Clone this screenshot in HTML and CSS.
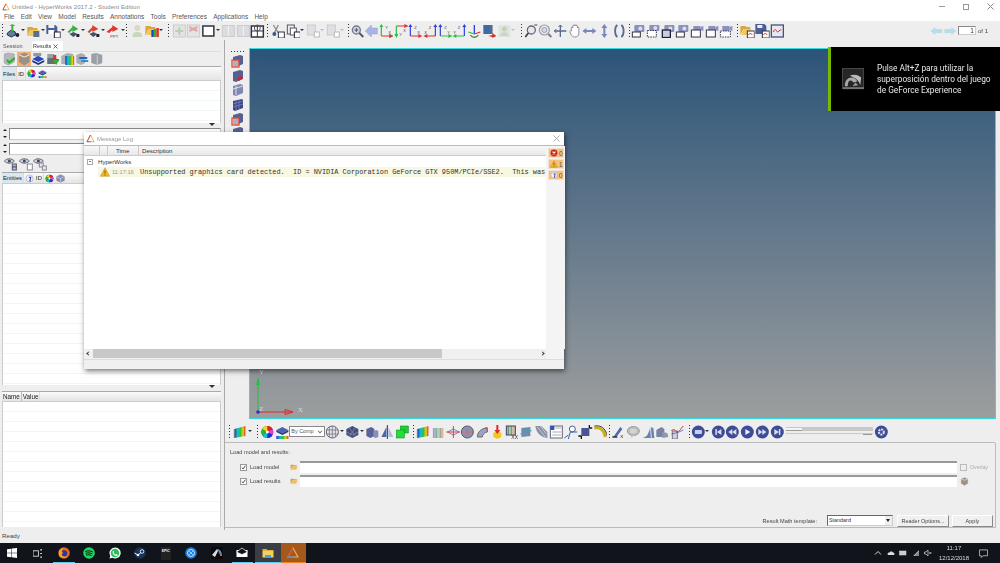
FILE: index.html
```html
<!DOCTYPE html>
<html lang="en">
<head>
<meta charset="utf-8">
<title>HyperWorks</title>
<link rel="stylesheet" href="styles.css">
</head>
<body>
<svg class="defs" aria-hidden="true">
  <defs>
    <linearGradient id="bar" x1="0" x2="1" y1="0" y2="0"><stop offset="0" stop-color="#2030d0"/><stop offset=".3" stop-color="#18c0d0"/><stop offset=".55" stop-color="#30c030"/><stop offset=".8" stop-color="#e8d020"/><stop offset="1" stop-color="#e02020"/></linearGradient>
    <linearGradient id="barf" x1="0" x2="1" y1="0" y2="0"><stop offset="0" stop-color="#a0a8e0"/><stop offset=".5" stop-color="#a8dca8"/><stop offset="1" stop-color="#e8a8a0"/></linearGradient>
    <symbol id="model" viewBox="0 0 14 14"><path d="M1 9l4-3 4 2v3l-4 2-4-2z" fill="#5a7fa0" stroke="#334"/><path d="M5 7V2H3l3-2 3 2H7v5z" fill="#3cb43c"/><circle cx="11" cy="11" r="2" fill="#223"/></symbol>
    <symbol id="folder" viewBox="0 0 14 14"><path d="M1 3h5l1 1h4v2H4L1 12z" fill="#d8a840"/><path d="M4 6h9l-2 6H1z" fill="#f0c860"/><rect x="7" y="7" width="6" height="6" fill="#5a6f90"/></symbol>
    <symbol id="save" viewBox="0 0 14 14"><path d="M0 1h9l2 2v7H0z" fill="#4a5f98"/><rect x="2" y="1" width="6" height="3" fill="#eef"/><rect x="2" y="6" width="6" height="4" fill="#fff"/><rect x="8" y="8" width="6" height="6" fill="#fff" stroke="#223"/></symbol>
    <symbol id="garrow" viewBox="0 0 14 14"><path d="M1 8l5-5V1l6 4-6 3V6l-3 3z" fill="#3cb43c"/><path d="M3 10l4-2 4 2-4 3z" fill="#456"/><rect x="10" y="10" width="3" height="3" fill="#223"/></symbol>
    <symbol id="rarrow" viewBox="0 0 14 14"><path d="M1 8l5-5V1l6 4-6 3V6l-3 3z" fill="#d84030"/><path d="M3 10l4-2 4 2-4 3z" fill="#456"/><rect x="10" y="10" width="3" height="3" fill="#223"/></symbol>
    <symbol id="ppt" viewBox="0 0 14 14"><path d="M0 8l6-5V1l6 4-6 3V6L3 9z" fill="#e03828"/><text x="4" y="13.5" font-size="4" font-family="Liberation Sans" fill="#444">PPT</text></symbol>
    <symbol id="person" viewBox="0 0 14 14"><circle cx="7" cy="4" r="3" fill="#d8d8c8"/><path d="M2 13c0-4 2-5 5-5s5 1 5 5z" fill="#c8d8c0"/></symbol>
    <symbol id="fcolor" viewBox="0 0 14 14"><path d="M0 2h5l1 1h4v2H3L0 12z" fill="#d8a840"/><path d="M3 5h8l-1 6H1z" fill="#f0c860"/><rect x="6" y="6" width="2.500" height="7" fill="#2040d0"/><rect x="8.500" y="5" width="2.500" height="8" fill="#30b030"/><rect x="11" y="4" width="2.500" height="9" fill="#e03020"/></symbol>
    <symbol id="fplus" viewBox="0 0 14 14"><rect x="1" y="1" width="12" height="12" fill="#e4e4e4" stroke="#ccc"/><path d="M7 3v8M3 7h8" stroke="#b8d0b8" stroke-width="2"/></symbol>
    <symbol id="fred" viewBox="0 0 14 14"><rect x="1" y="1" width="12" height="12" fill="#e4e4e4" stroke="#ccc"/><path d="M3 3l8 4M11 3L3 7" stroke="#e0a8a8" stroke-width="2"/></symbol>
    <symbol id="box" viewBox="0 0 14 14"><rect x="1.500" y="2" width="11" height="10" fill="#fff" stroke="#334" stroke-width="1.500"/></symbol>
    <symbol id="fbox" viewBox="0 0 14 14"><rect x="1" y="1.500" width="12" height="11" fill="#dcdce0" stroke="#ccc"/><path d="M7 2v10" stroke="#f4f4f4"/></symbol>
    <symbol id="calc" viewBox="0 0 14 14"><rect x="1" y="2" width="12" height="11" fill="#fff" stroke="#334" stroke-width="1.500"/><path d="M1 7h12M7 2v11" stroke="#334"/><circle cx="7" cy="4" r="3" fill="none" stroke="#556"/></symbol>
    <symbol id="scis" viewBox="0 0 14 14"><path d="M2 1l5 8M7 1L3 9" stroke="#889" stroke-width="1.300"/><circle cx="3" cy="10" r="2" fill="#458"/><rect x="7" y="8" width="6" height="6" fill="#fff" stroke="#334"/></symbol>
    <symbol id="copy" viewBox="0 0 14 14"><rect x="1" y="1" width="7" height="9" fill="#eee" stroke="#556"/><rect x="4" y="4" width="6" height="7" fill="#fff" stroke="#556"/><rect x="8" y="8" width="6" height="6" fill="#fff" stroke="#223"/></symbol>
    <symbol id="fcopy" viewBox="0 0 14 14"><rect x="1" y="1" width="8" height="10" fill="#dfe0e6" stroke="#ccc"/><rect x="8" y="8" width="5" height="5" fill="#fff" stroke="#bbb"/></symbol>
    <symbol id="zoom" viewBox="0 0 14 14"><circle cx="6" cy="6" r="4" fill="#c8d8e8" stroke="#778" stroke-width="1.300"/><path d="M9 9l4 4" stroke="#556" stroke-width="2"/><path d="M4 6h4M6 4v4" stroke="#556"/></symbol>
    <symbol id="larrow" viewBox="0 0 14 14"><path d="M1 7l6-6v3h6v6H7v3z" fill="#aab4e4" stroke="#8f9ad0" stroke-width=".5"/></symbol>
    <symbol id="ax1" viewBox="0 0 14 14"><path d="M2 2v10" stroke="#2cc040" stroke-width="1.200"/><path d="M0 3l2-3 2 3zM10 10l4 2-4 2z" fill="#2cc040"/><path d="M2 12h9" stroke="#e03030" stroke-width="1.200"/><path d="M10 10l4 2-4 2z" fill="#e03030"/><text x="6" y="5" font-size="4" font-family="Liberation Sans" fill="#444">Y</text><text x="9" y="9.500" font-size="4" font-family="Liberation Sans" fill="#444">X</text></symbol>
    <symbol id="ax2" viewBox="0 0 14 14"><path d="M2 2h9" stroke="#e03030" stroke-width="1.200"/><path d="M10 0l4 2-4 2z" fill="#e03030"/><path d="M2 2v9" stroke="#2cc040" stroke-width="1.200"/><path d="M0 10l2 4 2-4z" fill="#2cc040"/><text x="5" y="12" font-size="4" font-family="Liberation Sans" fill="#444">Y</text><text x="9" y="8" font-size="4" font-family="Liberation Sans" fill="#444">X</text></symbol>
    <symbol id="ax3" viewBox="0 0 14 14"><path d="M2 2v10" stroke="#3040e0" stroke-width="1.200"/><path d="M0 3l2-3 2 3z" fill="#3040e0"/><path d="M2 12h9" stroke="#e03030" stroke-width="1.200"/><path d="M10 10l4 2-4 2z" fill="#e03030"/><text x="6" y="5" font-size="4" font-family="Liberation Sans" fill="#444">Z</text><text x="9" y="9.500" font-size="4" font-family="Liberation Sans" fill="#444">X</text></symbol>
    <symbol id="ax4" viewBox="0 0 14 14"><path d="M12 2v10" stroke="#3040e0" stroke-width="1.200"/><path d="M10 3l2-3 2 3z" fill="#3040e0"/><path d="M3 12h9" stroke="#e03030" stroke-width="1.200"/><path d="M4 10l-4 2 4 2z" fill="#e03030"/><text x="5.500" y="5" font-size="4" font-family="Liberation Sans" fill="#444">Z</text><text x="1" y="9.500" font-size="4" font-family="Liberation Sans" fill="#444">X</text></symbol>
    <symbol id="ax5" viewBox="0 0 14 14"><path d="M2 2v10" stroke="#3040e0" stroke-width="1.200"/><path d="M0 3l2-3 2 3z" fill="#3040e0"/><path d="M2 12h9" stroke="#2cc040" stroke-width="1.200"/><path d="M10 10l4 2-4 2z" fill="#2cc040"/><text x="6" y="5" font-size="4" font-family="Liberation Sans" fill="#444">Z</text><text x="9" y="9.500" font-size="4" font-family="Liberation Sans" fill="#444">Y</text></symbol>
    <symbol id="ax6" viewBox="0 0 14 14"><path d="M12 2v10" stroke="#3040e0" stroke-width="1.200"/><path d="M10 3l2-3 2 3z" fill="#3040e0"/><path d="M3 12h9" stroke="#2cc040" stroke-width="1.200"/><path d="M4 10l-4 2 4 2z" fill="#2cc040"/><text x="5.500" y="5" font-size="4" font-family="Liberation Sans" fill="#444">Z</text><text x="1" y="9.500" font-size="4" font-family="Liberation Sans" fill="#444">Y</text></symbol>
    <symbol id="ax7" viewBox="0 0 14 14"><path d="M7 1v9" stroke="#3040e0" stroke-width="1.300"/><path d="M7 10l6-2" stroke="#e03030" stroke-width="1.300"/><path d="M7 10L1 8" stroke="#2cc040" stroke-width="1.300"/><path d="M3 11c2 3 6 3 8 0" fill="none" stroke="#3a8a40" stroke-width="1.300"/></symbol>
    <symbol id="view" viewBox="0 0 14 14"><rect x="1" y="1" width="9" height="9" fill="#3a6aa8"/><path d="M7 1h3v9H7z" fill="#5a6a80"/><path d="M6 12l4-1V9l4 3-4 2v-1z" fill="#e02828"/></symbol>
    <symbol id="fperson" viewBox="0 0 14 14"><rect x="1" y="1" width="12" height="12" fill="#dfe4e0"/><circle cx="7" cy="5" r="2.500" fill="#c8d0b8"/><path d="M3 12c0-3 2-4 4-4s4 1 4 4z" fill="#c8d8c8"/></symbol>
    <symbol id="zin" viewBox="0 0 14 14"><circle cx="7" cy="6" r="4" fill="#e4e8ee" stroke="#667" stroke-width="1.300"/><path d="M4 9l-3 4" stroke="#445" stroke-width="1.800"/><path d="M10 1h3" stroke="#445"/></symbol>
    <symbol id="zfit" viewBox="0 0 14 14"><circle cx="6" cy="6" r="5" fill="none" stroke="#99a" stroke-width="1.200"/><circle cx="6" cy="6" r="2.500" fill="#d8dce8" stroke="#99a"/><path d="M10 10l3 3" stroke="#778" stroke-width="1.800"/></symbol>
    <symbol id="cross" viewBox="0 0 14 14"><path d="M7 1v12M1 7h12" stroke="#5a6a8a" stroke-width="1.300"/><path d="M7 1L5 3M7 1l2 2M1 7l2-2M1 7l2 2" stroke="#5a6a8a"/></symbol>
    <symbol id="hand" viewBox="0 0 14 14"><path d="M3 7V4c0-1 1.500-1 1.500 0V2c0-1 1.500-1 1.500 0v-.5c0-1 1.500-1 1.500 0V2c0-1 1.500-1 1.500 0v2c0-1 1.500-1 1.500 0v5c0 3-2 4-4 4s-3-1-4-3L1.500 8c-.5-1 1-1.500 1.500-1z" fill="#fff" stroke="#778" stroke-width=".8"/></symbol>
    <symbol id="hmove" viewBox="0 0 14 14"><path d="M0 7l4-3v2h6V4l4 3-4 3V8H4v2z" fill="#7a86c0"/></symbol>
    <symbol id="vmove" viewBox="0 0 14 14"><path d="M7 0l3 4H8v6h2l-3 4-3-4h2V4H4z" fill="#7a86c0"/></symbol>
    <symbol id="rot" viewBox="0 0 14 14"><path d="M5 1C2 3 2 11 5 13M9 1c3 2 3 10 0 12" fill="none" stroke="#5a6a9a" stroke-width="1.800"/></symbol>
    <symbol id="cam1" viewBox="0 0 14 14"><rect x="3" y="1" width="10" height="7" rx="1" fill="#8a90c0"/><circle cx="9" cy="4.500" r="2" fill="#dde"/><rect x="1" y="8" width="8" height="5" fill="#fff" stroke="#334"/></symbol>
    <symbol id="cam2" viewBox="0 0 14 14"><rect x="3" y="1" width="10" height="6" rx="1" fill="#8a90c0"/><circle cx="9" cy="4" r="2" fill="#dde"/><rect x="1" y="6.500" width="9" height="6.500" fill="#fff" stroke="#334" stroke-dasharray="1.500 1"/></symbol>
    <symbol id="cam3" viewBox="0 0 14 14"><rect x="3" y="1" width="10" height="7" rx="1" fill="#8a90c0"/><circle cx="9" cy="4.500" r="2" fill="#dde"/><rect x="1" y="6" width="8" height="7.500" fill="#c8cce8" stroke="#223" stroke-width="1.300"/></symbol>
    <symbol id="cam4" viewBox="0 0 14 14"><path d="M3 2h7v5H3z" fill="#8a90c0"/><path d="M10 3l3-1v5l-3-1z" fill="#8a90c0"/><rect x="1" y="6" width="9" height="7" fill="#fff" stroke="#334"/></symbol>
    <symbol id="cam5" viewBox="0 0 14 14"><path d="M3 2h7v5H3z" fill="#8a90c0"/><path d="M10 3l3-1v5l-3-1z" fill="#8a90c0"/><rect x="1" y="7" width="10" height="6" fill="#fff" stroke="#334" stroke-dasharray="1.500 1"/></symbol>
    <symbol id="fgraph" viewBox="0 0 14 14"><path d="M0 2h5l1 1h4v2H3L0 11z" fill="#d8a840"/><path d="M3 5h8l-2 6H1z" fill="#f0c860"/><rect x="7" y="7" width="7" height="7" fill="#fff" stroke="#334"/><path d="M8 11l2-2 2 2" stroke="#e03030" fill="none"/></symbol>
    <symbol id="sgraph" viewBox="0 0 14 14"><path d="M0 0h9l2 2v8H0z" fill="#4a5f98"/><rect x="2" y="1" width="5" height="3" fill="#eef"/><rect x="7" y="7" width="7" height="7" fill="#fff" stroke="#334"/><path d="M8 11l2-2 2 2" stroke="#e03030" fill="none"/></symbol>
    <symbol id="graph" viewBox="0 0 14 14"><rect x="1" y="1" width="12" height="12" fill="#e8e8f4" stroke="#4a5078" stroke-width="1.300"/><path d="M3 8c2-5 3-1 4 0s2-3 4-2" stroke="#e03030" fill="none"/></symbol>
    <symbol id="navl" viewBox="0 0 14 14"><path d="M1 7l5-4v2h7v4H6v2z" fill="#b8dcec"/></symbol>
    <symbol id="navr" viewBox="0 0 14 14"><path d="M13 7L8 3v2H1v4h7v2z" fill="#b8dcec"/></symbol>
    <symbol id="rcheck" viewBox="0 0 14 14"><path d="M2 2l4-1 6 1v8l-6 3-4-2z" fill="#b4b8bc" stroke="#889" stroke-width=".5"/><path d="M4 9l3 3 6-5-1-2-5 4-2-2z" fill="#30b030"/></symbol>
    <symbol id="rmod" viewBox="0 0 14 14"><path d="M2 3l5-2 5 2v7l-5 3-5-3z" fill="#a09080" stroke="#889" stroke-width=".5"/><path d="M2 3l5 2 5-2" fill="none" stroke="#eee"/></symbol>
    <symbol id="rblue" viewBox="0 0 14 14"><path d="M2 1h8v3L6 5 2 4z" fill="#9098a0"/><path d="M1 7l6-3 6 3-6 3z" fill="#2848c0"/><path d="M1 8l6 3 6-3v2l-6 3-6-3z" fill="#283880"/></symbol>
    <symbol id="rdown" viewBox="0 0 14 14"><path d="M1 2h7v4H1z" fill="#9aa0aa"/><rect x="1" y="6" width="9" height="6" fill="#60707a"/><path d="M7 3h3v4h3l-4 5-4-5h2z" fill="#e03028"/><path d="M6 8h7l-3 5z" fill="#30b030"/></symbol>
    <symbol id="rcolor" viewBox="0 0 14 14"><path d="M1 4l6-3 6 1v10H1z" fill="#a8aeb4"/><rect x="5" y="4" width="9" height="9" fill="url(#bar)"/></symbol>
    <symbol id="rflow" viewBox="0 0 14 14"><path d="M1 3l5-2 4 2v8l-4 2-5-2z" fill="#a8aeb4"/><rect x="4" y="5" width="8" height="2" fill="#3060c0"/><rect x="6" y="8" width="7" height="2" fill="#3090d0"/></symbol>
    <symbol id="rgrey" viewBox="0 0 14 14"><path d="M2 2l5-1 6 2v8l-5 2-6-2z" fill="#9aa0a6"/><path d="M8 3v10" stroke="#d0d0d0"/></symbol>
    <symbol id="wheel" viewBox="0 0 14 14"><circle cx="7" cy="7" r="6" fill="#222"/><path d="M7 7V1a6 6 0 0 1 5.200 3z" fill="#e82020"/><path d="M7 7l5.200-3a6 6 0 0 1 0 6z" fill="#e040d0"/><path d="M7 7l5.200 3A6 6 0 0 1 7 13z" fill="#2030d8"/><path d="M7 7v6a6 6 0 0 1-5.200-3z" fill="#18c0e0"/><path d="M7 7L1.800 10a6 6 0 0 1 0-6z" fill="#20c020"/><path d="M7 7L1.800 4A6 6 0 0 1 7 1z" fill="#f0d820"/><circle cx="7" cy="7" r="1.500" fill="#fff"/></symbol>
    <symbol id="stack" viewBox="0 0 14 14"><path d="M1 5l6-3 6 3-6 3z" fill="#5060b0"/><path d="M1 5v2l6 3 6-3V5L7 8z" fill="#303c80"/><rect x="1" y="11" width="12" height="3" fill="url(#bar)"/></symbol>
    <symbol id="cubeg" viewBox="0 0 14 14"><path d="M7 1l6 3v6l-6 3-6-3V4z" fill="#8890b8" stroke="#5a6088" stroke-width=".5"/><path d="M1 4l6 3 6-3M7 7v6" fill="none" stroke="#eef" stroke-width=".8"/></symbol>
    <symbol id="eye1" viewBox="0 0 14 14"><path d="M0 4c3-3 7-3 10 0-3 3-7 3-10 0z" fill="#cdd3dc" stroke="#667"/><circle cx="5" cy="4" r="1.500" fill="#445"/><rect x="8" y="7" width="4" height="3" fill="#a8c0e0" stroke="#556"/><rect x="8" y="10" width="4" height="3" fill="#a8c0e0" stroke="#556"/></symbol>
    <symbol id="eye2" viewBox="0 0 14 14"><path d="M0 4c3-3 7-3 10 0-3 3-7 3-10 0z" fill="#cdd3dc" stroke="#667"/><circle cx="5" cy="4" r="1.500" fill="#445"/><rect x="8" y="7" width="5" height="6" fill="#fff" stroke="#889"/></symbol>
    <symbol id="eye3" viewBox="0 0 14 14"><path d="M0 4c3-3 7-3 10 0-3 3-7 3-10 0z" fill="#cdd3dc" stroke="#667"/><circle cx="5" cy="4" r="1.500" fill="#445"/><rect x="6" y="6" width="4" height="4" fill="#e8e8e8" stroke="#889"/><rect x="9" y="9" width="4" height="4" fill="#e8e8e8" stroke="#889"/></symbol>
    <symbol id="info" viewBox="0 0 14 14"><circle cx="7" cy="7" r="5.500" fill="#eef0fa" stroke="#aab"/><path d="M6 5h3L7.500 11H9" stroke="#2a40b0" stroke-width="1.600" fill="none"/></symbol>
    <symbol id="s1" viewBox="0 0 14 14"><path d="M2 3l7-2 3 1v8l-7 3-3-1z" fill="#586090"/><rect x="1" y="6" width="7" height="7" fill="#fff" fill-opacity=".5" stroke="#e04830" stroke-width="1.300"/></symbol>
    <symbol id="s2" viewBox="0 0 14 14"><path d="M2 3l7-2 3 1v8l-7 3-3-1z" fill="#586090"/><path d="M6 10l4-3 2 2-4 3z" fill="#e02020"/></symbol>
    <symbol id="s3" viewBox="0 0 14 14"><path d="M2 3l7-2 3 1v8l-7 3-3-1z" fill="#8088b0"/><path d="M2 6l10-3M5 3v9" stroke="#dde"/></symbol>
    <symbol id="s4" viewBox="0 0 14 14"><path d="M2 3l9-2 1 1v8l-8 3-2-1z" fill="#3c4888"/><path d="M2 6l10-3M2 9l10-3M5 3v9M8 2v9" stroke="#8890c8" stroke-width=".6"/></symbol>
    <symbol id="wire" viewBox="0 0 14 14"><circle cx="7" cy="7" r="6" fill="#e4e8ea" stroke="#667"/><path d="M1 5h12M1 9h12M4 2v10M7 1v12M10 2v10" stroke="#667" stroke-width=".7"/></symbol>
    <symbol id="dwire" viewBox="0 0 14 14"><path d="M7 1l6 3v6l-6 3-6-3V4z" fill="#445080"/><path d="M1 7l6 3 6-3M4 3l6 8M10 3l-6 8" stroke="#aab" stroke-width=".5" fill="none"/></symbol>
    <symbol id="cubes" viewBox="0 0 14 14"><path d="M1 4l5-2 3 2v7l-4 2-4-2z" fill="#5a6498"/><path d="M8 6l3-1 2 1v6l-3 1-2-1z" fill="#8890b8"/></symbol>
    <symbol id="mirror" viewBox="0 0 14 14"><path d="M7 0v14" stroke="#334"/><path d="M6 2v10H1z" fill="#5064b0"/><path d="M8 2v10h5z" fill="#b0bce0"/></symbol>
    <symbol id="gcube" viewBox="0 0 14 14"><rect x="5" y="1" width="8" height="7" fill="#18d030" stroke="#0a8020" stroke-width=".5"/><rect x="1" y="5" width="8" height="8" fill="#20e038" stroke="#0a8020" stroke-width=".5"/></symbol>
    <symbol id="cbar" viewBox="0 0 14 14"><path d="M1 4l11-3v10L1 13z" fill="url(#bar)"/><path d="M1 4v9" stroke="#778"/></symbol>
    <symbol id="cbarf" viewBox="0 0 14 14"><path d="M2 3h10v10H2z" fill="url(#barf)"/><path d="M2 3v10M5 3v10M9 3v10" stroke="#778" stroke-width=".5"/></symbol>
    <symbol id="sym" viewBox="0 0 14 14"><path d="M1 7l6-3 6 3-6 3z" fill="none" stroke="#8088b0"/><path d="M7 1v12" stroke="#e04040"/><path d="M0 7h14" stroke="#e04040"/></symbol>
    <symbol id="sph" viewBox="0 0 14 14"><circle cx="7" cy="7" r="6" fill="#8a96b8" stroke="#556"/><path d="M1 7h12M7 1v12M3 3l8 8M11 3l-8 8" stroke="#e06060" stroke-width=".6"/></symbol>
    <symbol id="tube" viewBox="0 0 14 14"><path d="M2 12c0-5 4-9 10-9v4c-3 0-5 3-5 5z" fill="#9aa4c0" stroke="#667"/><circle cx="11" cy="3" r="1" fill="#e04040"/></symbol>
    <symbol id="yarrow" viewBox="0 0 14 14"><path d="M3 8l4-2 4 2v4l-4 2-4-2z" fill="#f0c820"/><path d="M6 0h2v5h2L7 9 4 5h2z" fill="#e02828"/></symbol>
    <symbol id="cbarx" viewBox="0 0 14 14"><rect x="1" y="1" width="9" height="9" fill="url(#barf)" stroke="#445"/><path d="M3 1v9M6 1v9" stroke="#445" stroke-width=".5"/><text x="6" y="14" font-size="5" font-family="Liberation Sans" fill="#333">XX</text></symbol>
    <symbol id="flow" viewBox="0 0 14 14"><path d="M2 3l9-1v9l-9 1z" fill="#7a84a8"/><path d="M4 6h8l-2-2M1 9h8l-2 2" stroke="#2ab0d0" fill="none"/></symbol>
    <symbol id="dish" viewBox="0 0 14 14"><path d="M1 1c1 7 5 11 12 12V7L7 1z" fill="#8a92a8"/><path d="M3 2l8 10M6 1l6 8" stroke="#dde" stroke-width=".7"/></symbol>
    <symbol id="panel" viewBox="0 0 14 14"><rect x="1" y="1" width="12" height="12" fill="#fff" stroke="#667"/><rect x="1" y="1" width="4" height="4" fill="#3050c0"/><path d="M6 3h6M3 7h9M3 10h9" stroke="#aab"/></symbol>
    <symbol id="pax" viewBox="0 0 14 14"><circle cx="9" cy="4" r="3" fill="#fff" stroke="#4060a0"/><path d="M7 7l-2 7M7 7h7M5 10L1 13" stroke="#4060a0"/></symbol>
    <symbol id="node" viewBox="0 0 14 14"><rect x="3" y="3" width="8" height="8" fill="#4a5490"/><path d="M0 11h3M3 11v3M11 3h3M11 0v3" stroke="#112" stroke-width="1.300"/></symbol>
    <symbol id="bend" viewBox="0 0 14 14"><path d="M1 3c6-1 10 2 11 9" fill="none" stroke="#c8b020" stroke-width="3"/><path d="M1 1c7-1 11 2 13 10" fill="none" stroke="#222" stroke-width=".8"/></symbol>
    <symbol id="tool1" viewBox="0 0 14 14"><path d="M2 12L9 2l2 2-6 8z" fill="#4a6ab0"/><path d="M1 12h5" stroke="#334" stroke-width="1.300"/><text x="9" y="13" font-size="6" font-family="Liberation Sans" fill="#333">x</text></symbol>
    <symbol id="bubble" viewBox="0 0 14 14"><ellipse cx="7" cy="6" rx="6" ry="4.500" fill="#bcc0bc" stroke="#999"/><path d="M5 10v3l3-3z" fill="#bcc0bc"/><path d="M4 5h6M4 7h6" stroke="#fff" stroke-width=".7"/></symbol>
    <symbol id="ramp" viewBox="0 0 14 14"><path d="M1 13c5-1 6-4 8-11l3 1 1 10z" fill="#6a80b0"/><path d="M9 2l1 11" stroke="#dde"/></symbol>
    <symbol id="mach" viewBox="0 0 14 14"><path d="M1 5l5-3 3 2v8H1z" fill="#7a84a0"/><path d="M7 7l5 1 1 4-6 1z" fill="#9098b0"/></symbol>
    <symbol id="curve" viewBox="0 0 14 14"><rect x="2" y="6" width="5" height="8" fill="#d0d4d8" stroke="#778"/><path d="M1 6c3-4 4 1 6 1s3-3 6-6" stroke="#e03030" fill="none"/><path d="M1 9c4-1 6-1 12-4" stroke="#3050c0" fill="none" stroke-width=".7"/></symbol>
    <symbol id="ball" viewBox="0 0 14 14"><circle cx="7" cy="7" r="6.500" fill="#3e4c98"/><rect x="3.500" y="5" width="7" height="4" fill="#c8d0f0"/></symbol>
    <symbol id="first" viewBox="0 0 14 14"><circle cx="7" cy="7" r="6.500" fill="#3e4c98"/><path d="M4 4h1.500v6H4zM10 4v6L5.500 7z" fill="#dde"/></symbol>
    <symbol id="prev" viewBox="0 0 14 14"><circle cx="7" cy="7" r="6.500" fill="#3e4c98"/><path d="M7 4v6L3 7zM11 4v6L7 7z" fill="#dde"/></symbol>
    <symbol id="play" viewBox="0 0 14 14"><circle cx="7" cy="7" r="6.500" fill="#3e4c98"/><path d="M5 4v6l5-3z" fill="#eef"/></symbol>
    <symbol id="next" viewBox="0 0 14 14"><circle cx="7" cy="7" r="6.500" fill="#3e4c98"/><path d="M7 4v6l4-3zM3 4v6l4-3z" fill="#dde"/></symbol>
    <symbol id="last" viewBox="0 0 14 14"><circle cx="7" cy="7" r="6.500" fill="#3e4c98"/><path d="M8.500 4H10v6H8.500zM4 4v6l4.500-3z" fill="#dde"/></symbol>
    <symbol id="gear" viewBox="0 0 14 14"><circle cx="7" cy="7" r="6.500" fill="#3e4c98"/><circle cx="7" cy="7" r="2.500" fill="none" stroke="#dde" stroke-width="2" stroke-dasharray="2 .8"/></symbol>
    <symbol id="warn" viewBox="0 0 14 14"><path d="M7 1l6.500 12H.5z" fill="#f0b820" stroke="#b88010" stroke-width=".6"/><path d="M6.300 5h1.400l-.2 4.500h-1zM6.300 10.500h1.400V12H6.300z" fill="#6a4a10"/></symbol>
    <symbol id="err" viewBox="0 0 14 14"><circle cx="7" cy="7" r="6" fill="#c82820"/><path d="M4.500 4.500l5 5M9.500 4.500l-5 5" stroke="#fff" stroke-width="2"/></symbol>
    <symbol id="logo" viewBox="0 0 14 14"><path d="M7 1.500L1.500 12h11z" fill="none" stroke="#e8b060" stroke-width="1.500"/><path d="M7 1.500L1.500 12" stroke="#e04030" stroke-width="1.500"/><path d="M1.500 12h6" stroke="#3090d0" stroke-width="1.500"/></symbol>
    <symbol id="fold" viewBox="0 0 14 14"><path d="M1 3h5l1 1h5v2H4l-3 6z" fill="#d8a040"/><path d="M4 6h9l-2 6H1z" fill="#f0c060"/></symbol>
    <symbol id="nv" viewBox="0 0 24 24"><rect x=".5" y=".5" width="22" height="21" fill="#262626" stroke="#4a4a4a"/><path d="M1 22V20h22v2z" fill="#777"/><path d="M3 19c0-6 3-9 7-9 3 0 5 2 6 4l-4 1c-1-1-2-2-3-2-2 0-3 2-3 6z" fill="#a8a8a8"/><path d="M8 8c5-2 9-1 12 2l-1 8c-1-5-5-8-11-10z" fill="#bcbcbc"/><path d="M11 19l6-1-3-3z" fill="#999"/></symbol>
  </defs>
</svg>

<div class="app">
  <header class="title">
    <svg class="tlogo"><use href="#logo"/></svg>
    <span class="ttext">Untitled - HyperWorks 2017.2 - Student Edition</span>
    <div class="winbtns">
      <span class="wmin"></span><span class="wmax"></span>
      <svg class="wx" viewBox="0 0 7 7"><path d="M.5.5l6 6M6.500.5l-6 6" stroke="#888"/></svg>
    </div>
  </header>
  <nav class="menu">
    <span>File</span><span>Edit</span><span>View</span><span>Model</span><span>Results</span><span>Annotations</span><span>Tools</span><span>Preferences</span><span>Applications</span><span>Help</span>
  </nav>

  <div class="bar topbar">
    <i class="sep"></i>
    <svg class="ic"><use href="#model"/></svg><b class="car"></b>
    <svg class="ic"><use href="#folder"/></svg><b class="car"></b>
    <svg class="ic"><use href="#save"/></svg><b class="car"></b>
    <svg class="ic"><use href="#garrow"/></svg><b class="car"></b>
    <svg class="ic"><use href="#rarrow"/></svg><b class="car"></b>
    <svg class="ic"><use href="#ppt"/></svg><b class="car"></b>
    <i class="sep"></i>
    <svg class="ic"><use href="#person"/></svg>
    <svg class="ic"><use href="#fcolor"/></svg><b class="car"></b>
    <i class="sep ml3"></i>
    <svg class="ic"><use href="#fplus"/></svg>
    <svg class="ic"><use href="#fred"/></svg>
    <svg class="ic"><use href="#box"/></svg><b class="car"></b>
    <svg class="ic"><use href="#fbox"/></svg>
    <svg class="ic"><use href="#fbox"/></svg>
    <svg class="ic"><use href="#calc"/></svg>
    <i class="sep ml2"></i>
    <svg class="ic"><use href="#scis"/></svg>
    <svg class="ic"><use href="#copy"/></svg><b class="car"></b>
    <svg class="ic"><use href="#fcopy"/></svg><b class="car fade"></b>
    <svg class="ic"><use href="#fcopy"/></svg><b class="car fade"></b>
    <i class="sep ml2 mr0"></i>
    <svg class="ic"><use href="#zoom"/></svg>
    <svg class="ic"><use href="#larrow"/></svg>
    <svg class="ic"><use href="#ax1"/></svg>
    <svg class="ic"><use href="#ax2"/></svg>
    <svg class="ic"><use href="#ax3"/></svg>
    <svg class="ic"><use href="#ax4"/></svg>
    <svg class="ic"><use href="#ax5"/></svg>
    <svg class="ic"><use href="#ax6"/></svg>
    <svg class="ic"><use href="#ax7"/></svg>
    <svg class="ic"><use href="#view"/></svg>
    <svg class="ic"><use href="#fperson"/></svg><b class="car fade"></b>
    <i class="sep ml4 mr1"></i>
    <svg class="ic"><use href="#zin"/></svg>
    <svg class="ic"><use href="#zfit"/></svg>
    <svg class="ic"><use href="#cross"/></svg>
    <svg class="ic"><use href="#hand"/></svg>
    <svg class="ic"><use href="#hmove"/></svg>
    <svg class="ic"><use href="#vmove"/></svg>
    <svg class="ic"><use href="#rot"/></svg>
    <i class="sep ml3 mr0"></i>
    <svg class="ic"><use href="#cam1"/></svg>
    <svg class="ic"><use href="#cam2"/></svg>
    <svg class="ic"><use href="#cam3"/></svg>
    <svg class="ic"><use href="#cam1"/></svg>
    <svg class="ic"><use href="#cam4"/></svg>
    <svg class="ic"><use href="#cam4"/></svg>
    <svg class="ic"><use href="#cam5"/></svg>
    <i class="sep ml3 mr1"></i>
    <svg class="ic"><use href="#fgraph"/></svg>
    <svg class="ic"><use href="#sgraph"/></svg>
    <svg class="ic"><use href="#graph"/></svg>
    <div class="pager">
      <svg class="ic"><use href="#navl"/></svg>
      <svg class="ic"><use href="#navr"/></svg>
      <span class="pageinput">1</span>
      <span class="pageof">of 1</span>
    </div>
  </div>

  <main class="main">
    <aside class="left">
      <div class="tabs">
        <span class="tab">Session</span>
        <span class="tab active">Results <svg class="tabx" viewBox="0 0 5 5"><path d="M.5.5l4 4M4.500.5l-4 4" stroke="#444" stroke-width=".8"/></svg></span>
      </div>
      <div class="ptools">
        <svg class="ic"><use href="#rcheck"/></svg>
        <svg class="ic on"><use href="#rmod"/></svg>
        <svg class="ic"><use href="#rblue"/></svg>
        <svg class="ic"><use href="#rdown"/></svg>
        <svg class="ic"><use href="#rcolor"/></svg>
        <svg class="ic"><use href="#rflow"/></svg>
        <svg class="ic"><use href="#rgrey"/></svg>
      </div>
      <div class="thead h15">
        <span class="th sel">Files</span><span class="th">ID</span><svg class="hic"><use href="#wheel"/></svg><svg class="hic last"><use href="#stack"/></svg>
      </div>
      <div class="list h42"></div>
      <div class="dropline d3"><b class="tri"></b></div>
      <div class="inrow"><span class="spin"><b class="up"></b><b class="dn"></b></span><span class="txt"></span></div>
      <div class="inrow"><span class="spin"><b class="up"></b><b class="dn"></b></span><span class="txt"></span></div>
      <div class="eyes">
        <svg class="ic"><use href="#eye1"/></svg>
        <svg class="ic"><use href="#eye2"/></svg>
        <svg class="ic"><use href="#eye3"/></svg>
      </div>
      <div class="thead h12">
        <span class="th sel">Entities</span><svg class="hic"><use href="#info"/></svg><span class="th">ID</span><svg class="hic"><use href="#wheel"/></svg><svg class="hic last"><use href="#cubeg"/></svg>
      </div>
      <div class="list h201"></div>
      <div class="dropline d6"><b class="tri"></b></div>
      <div class="thead h11 full">
        <span class="th nm">Name</span><span class="th">Value</span>
      </div>
      <div class="list grow"></div>
    </aside>

    <section class="right">
      <div class="upper">
        <div class="side">
          <i class="dots"></i>
          <svg class="sic"><use href="#s1"/></svg>
          <svg class="sic"><use href="#s2"/></svg>
          <svg class="sic"><use href="#s3"/></svg>
          <svg class="sic"><use href="#s4"/></svg>
          <svg class="sic"><use href="#s1"/></svg>
          <svg class="sic"><use href="#s2"/></svg>
        </div>
        <div class="viewport">
          <svg class="axes" viewBox="0 0 60 50">
            <path d="M8 45V12" stroke="#20c040" stroke-width="1"/>
            <path d="M8 10l-2 8h4z" fill="#20c040"/>
            <path d="M8 45h34" stroke="#e02828" stroke-width="1"/>
            <path d="M43 45l-8-2.500v5z" fill="none" stroke="#e02828"/>
            <circle cx="8" cy="45" r="1.800" fill="#2030e0"/>
            <text x="9" y="7" class="axt">Y</text>
            <text x="48" y="45" class="axt">X</text>
            <text x="9" y="44" class="axt">Z</text>
          </svg>
        </div>
      </div>

      <div class="bar lowbar">
        <i class="sep"></i>
        <svg class="ic"><use href="#cbar"/></svg><b class="car"></b>
        <i class="sep ml4 mr1"></i>
        <svg class="ic"><use href="#wheel"/></svg>
        <svg class="ic"><use href="#stack"/></svg>
        <span class="combo">By Comp<b class="chev"></b></span>
        <svg class="ic"><use href="#wire"/></svg><b class="car"></b>
        <svg class="ic"><use href="#dwire"/></svg><b class="car"></b>
        <svg class="ic"><use href="#cubes"/></svg>
        <svg class="ic"><use href="#mirror"/></svg>
        <svg class="ic"><use href="#gcube"/></svg>
        <i class="sep ml4 mr1"></i>
        <svg class="ic"><use href="#cbar"/></svg>
        <svg class="ic"><use href="#cbarf"/></svg>
        <svg class="ic"><use href="#sym"/></svg>
        <svg class="ic"><use href="#sph"/></svg>
        <svg class="ic"><use href="#tube"/></svg>
        <svg class="ic"><use href="#yarrow"/></svg>
        <svg class="ic"><use href="#cbarx"/></svg>
        <svg class="ic"><use href="#flow"/></svg>
        <svg class="ic"><use href="#dish"/></svg>
        <svg class="ic"><use href="#panel"/></svg>
        <svg class="ic"><use href="#pax"/></svg>
        <svg class="ic"><use href="#node"/></svg>
        <svg class="ic"><use href="#bend"/></svg>
        <i class="sep ml2 mr0"></i>
        <svg class="ic"><use href="#tool1"/></svg>
        <svg class="ic"><use href="#bubble"/></svg>
        <svg class="ic"><use href="#ramp"/></svg>
        <svg class="ic"><use href="#mach"/></svg>
        <svg class="ic"><use href="#curve"/></svg>
        <i class="sep ml4 mr0"></i>
        <svg class="ic"><use href="#ball"/></svg><b class="car"></b>
        <svg class="ic"><use href="#first"/></svg>
        <svg class="ic"><use href="#prev"/></svg>
        <svg class="ic"><use href="#play"/></svg>
        <svg class="ic"><use href="#next"/></svg>
        <svg class="ic"><use href="#last"/></svg>
        <div class="slider"><b class="thumb"></b><b class="thumb2"></b></div>
        <svg class="ic"><use href="#gear"/></svg>
      </div>

      <div class="load">
        <div class="loadhead">Load model and results:</div>
        <div class="frow">
          <span class="chk"><svg viewBox="0 0 7 7"><path d="M1 3.500l2 2 3-4.500" fill="none" stroke="#222" stroke-width="1.100"/></svg></span>
          <span class="flabel">Load model</span>
          <svg class="fic"><use href="#fold"/></svg>
          <span class="field"></span>
          <span class="chk off"></span>
          <span class="over">Overlay</span>
        </div>
        <div class="frow">
          <span class="chk"><svg viewBox="0 0 7 7"><path d="M1 3.500l2 2 3-4.500" fill="none" stroke="#222" stroke-width="1.100"/></svg></span>
          <span class="flabel">Load results</span>
          <svg class="fic"><use href="#fold"/></svg>
          <span class="field"></span>
          <svg class="fic2"><use href="#rmod"/></svg>
        </div>
        <div class="actions">
          <span class="tpl">Result Math template:</span>
          <span class="stdsel">Standard<b class="stdarrow"></b></span>
          <span class="btn wide">Reader Options...</span>
          <span class="btn">Apply</span>
        </div>
      </div>
    </section>
  </main>

  <div class="status">Ready</div>

  <footer class="taskbar">
    <svg class="win" viewBox="0 0 10 10"><path d="M0 1.300l4.300-.6v4H0zM4.800.6L10 0v4.700H4.800zM0 5.200h4.300v4L0 8.700zM4.800 5.200H10V10l-5.200-.7z" fill="#fff"/></svg>
    <span class="tb tv"><svg viewBox="0 0 10 10"><rect x="0" y="2" width="6" height="6" fill="none" stroke="#ddd"/><path d="M8 1h2M8 5h2M8 9h2" stroke="#ddd" stroke-width="1.200"/></svg></span>
    <span class="tb ul"><svg viewBox="0 0 12 12"><circle cx="6" cy="6" r="5.800" fill="#e8641c"/><circle cx="6" cy="6.500" r="3.200" fill="#2a3a9a"/><path d="M1 9c3 3 9 3 10-3 0 3-3 4-5 3.500C4 9 3 7 5 6 3 4 4 2 6 1 3 1 1 3 1 6z" fill="#f8a020"/></svg></span>
    <span class="tb"><svg viewBox="0 0 12 12"><circle cx="6" cy="6" r="5.800" fill="#1ed760"/><path d="M2.500 4.300c2.500-.8 5-.6 7 .5M3 6.200c2-.6 4.200-.4 6 .5M3.400 8c1.700-.4 3.400-.3 4.900.5" stroke="#111" fill="none" stroke-linecap="round"/></svg></span>
    <span class="tb"><svg viewBox="0 0 12 12"><path d="M6 .5a5.500 5.500 0 0 0-4.700 8.300L.5 11.500l2.800-.8A5.500 5.500 0 1 0 6 .5z" fill="#fff"/><circle cx="6" cy="6" r="4.300" fill="#25c05a"/><path d="M4.200 3.500l1 1.500-.6.700c.5 1 1.200 1.700 2.200 2l.7-.6 1.300.9c-.5 1.200-2 1.200-3.400.3C3.600 7 3 5 4.200 3.500z" fill="#fff"/></svg></span>
    <span class="tb"><svg viewBox="0 0 12 12"><circle cx="6" cy="6" r="5.800" fill="#16335a"/><circle cx="8" cy="4.500" r="1.800" fill="none" stroke="#eef" stroke-width=".9"/><circle cx="4" cy="8" r="1.300" fill="#eef"/><path d="M.5 6l3.500 2 3-2.500" stroke="#eef" fill="none"/></svg></span>
    <span class="tb"><span class="epic">EPIC</span></span>
    <span class="tb"><svg viewBox="0 0 12 12"><circle cx="6" cy="6" r="5.800" fill="#1a7ee0"/><circle cx="6" cy="6" r="3.500" fill="none" stroke="#cde" stroke-width="1"/><path d="M4 4l4 4M8 4L4 8" stroke="#cde" stroke-width=".8"/></svg></span>
    <span class="tb"><svg viewBox="0 0 12 12"><rect width="12" height="12" fill="#0a0a10"/><path d="M1 8l5-6 1 2-3 6z" fill="#ddd"/><path d="M6 2c3 0 5 3 5 7H9.500C9.500 6 8 4 6 3.500z" fill="#48a0d8"/><path d="M8 5l2 4" stroke="#e06030"/></svg></span>
    <span class="tb ul"><svg viewBox="0 0 12 12"><rect x=".5" y="3" width="11" height="7" fill="#fff"/><path d="M.5 5L6 1l5.500 4L6 7.500z" fill="#111" stroke="#fff" stroke-width=".7"/></svg></span>
    <span class="tb explorer"><svg viewBox="0 0 12 12"><path d="M.5 2h4l1 1h6v1H.5z" fill="#d8b040"/><rect x=".5" y="4" width="11" height="6.500" fill="#f4d060"/><rect x="3" y="8" width="6" height="2.500" fill="#4aa0d8"/></svg></span>
    <span class="tb hwtask"><svg viewBox="0 0 12 12"><path d="M6 1l5 9H1z" fill="none" stroke="#eab060" stroke-width="1.200"/><path d="M6 1L1 10" stroke="#e04030" stroke-width="1.200"/><path d="M1 10h6" stroke="#30a0e0" stroke-width="1.200"/></svg></span>
    <div class="tray">
      <svg class="tr t8" viewBox="0 0 8 8"><path d="M1 5.500l3-3 3 3" fill="none" stroke="#ddd"/></svg>
      <svg class="tr t8" viewBox="0 0 8 8"><path d="M1 6c-1-1.500 0-3 1.500-2.500C3 2 5.500 2 6 3.500c1.500 0 2 2 1 2.500z" fill="#ddd"/></svg>
      <svg class="tr t8" viewBox="0 0 8 8"><rect x=".5" y="2" width="6.500" height="4" fill="#ccc" stroke="#ddd" stroke-width=".5"/></svg>
      <svg class="tr t8" viewBox="0 0 8 8"><path d="M1 7l6-6v6z" fill="#888"/><path d="M2 7l5-5" stroke="#ddd" stroke-width=".5"/></svg>
      <svg class="tr t8" viewBox="0 0 8 8"><path d="M.5 3h1.500l2-2v6l-2-2H.5z" fill="none" stroke="#ddd" stroke-width=".7"/><path d="M5.300 3l2 2M7.300 3l-2 2" stroke="#ddd" stroke-width=".7"/></svg>
      <div class="clock"><span>11:17</span><span>12/12/2018</span></div>
      <svg class="tr note" viewBox="0 0 10 10"><path d="M.5 1h9v6.500H4.500L2.500 9.500v-2h-2z" fill="none" stroke="#ddd" stroke-width=".8"/></svg>
    </div>
  </footer>

  <section class="dialog">
    <div class="dtitle"><svg class="dlogo"><use href="#logo"/></svg><span>Message Log</span>
      <svg class="dx" viewBox="0 0 7 7"><path d="M.5.5l6 6M6.500.5l-6 6" stroke="#aaa"/></svg>
    </div>
    <div class="dbody">
      <div class="dmain">
        <div class="dhead"><span class="c1"></span><span class="c2"></span><span class="c3">Time</span><span class="c4">Description</span></div>
        <div class="drow"><span class="minus"></span><span class="grp">HyperWorks</span></div>
        <div class="dmsg"><svg class="dwarn"><use href="#warn"/></svg><span class="mtime">11:17:16</span><span class="mtext">Unsupported graphics card detected.  ID = NVIDIA Corporation GeForce GTX 950M/PCIe/SSE2.  This was</span></div>
      </div>
      <div class="dstrip">
        <div class="badge"><svg><use href="#err"/></svg><span>0</span></div>
        <div class="badge"><svg><use href="#warn"/></svg><span>1</span></div>
        <div class="badge"><svg><use href="#info"/></svg><span>0</span></div>
      </div>
    </div>
    <div class="dscroll"><b class="sl"></b><b class="thumbbar"></b><b class="sr"></b></div>
    <div class="dfoot"></div>
  </section>

  <aside class="toast">
    <svg class="nvlogo"><use href="#nv"/></svg>
    <p>Pulse Alt+Z para utilizar la<br>superposición dentro del juego<br>de GeForce Experience</p>
  </aside>
</div>
</body>
</html>
```
FILE: styles.css
```css
* { box-sizing: border-box; }
html, body { margin: 0; padding: 0; }
body { width: 1000px; height: 563px; overflow: hidden; background: #eee; }
.defs { position: absolute; width: 0; height: 0; }
.app {
  position: relative; width: 1000px; height: 563px; display: flex; flex-direction: column;
  font-family: "Liberation Sans", Arial, sans-serif; font-size: 5.600px; color: #444; overflow: hidden;
  filter: blur(.35px);
}
.title { height: 12px; background: #fff; display: flex; align-items: center; padding-top: 1px; padding-left: 2px; color: #888; }
.tlogo { width: 8px; height: 8px; margin-right: 2px; }
.ttext { font-size: 6px; letter-spacing: .07px; }
.winbtns { margin-left: auto; display: flex; align-items: center; }
.wmin { width: 6px; height: 1px; background: #999; margin-right: 18px; }
.wmax { width: 6px; height: 6px; border: 1px solid #999; margin-right: 18px; }
.wx { width: 7px; height: 7px; margin-right: 6px; }
.menu { height: 9px; background: #fff; display: flex; padding-left: 4px; gap: 6.200px; align-items: center; font-size: 6.500px; line-height: 9px; color: #555; }
.bar { display: flex; align-items: center; background: #eee; flex: none; }
.topbar { height: 19px; padding-left: 2px; }
.ic { width: 14.700px; height: 14px; flex: none; }
.car { width: 5.300px; height: 3px; flex: none; position: relative; }
.car::after { content: ""; position: absolute; left: 0; top: 0; border-left: 2px solid transparent; border-right: 2px solid transparent; border-top: 2px solid #333; }
.car.fade::after { border-top-color: #bbb; }
.sep { width: 2px; height: 13px; flex: none; margin-right: 2px; background: repeating-linear-gradient(#333 0 1px, transparent 1px 3px); background-size: 1px 100%; background-repeat: no-repeat; }
.ml2 { margin-left: 2px; } .ml3 { margin-left: 3px; } .ml4 { margin-left: 4px; }
.sep.mr0 { margin-right: 0; } .sep.mr1 { margin-right: 1px; }
.pager { margin-left: auto; display: flex; align-items: center; padding-right: 12px; }
.pageinput { width: 18px; height: 9px; margin-left: 0; border: 1px solid #888; border-right-color: #ccc; border-bottom-color: #ccc; background: #fff; text-align: right; font-size: 6.500px; line-height: 8px; padding-right: 1px; color: #333; }
.pageof { font-size: 6px; margin-left: 2px; color: #444; }

.main { height: 490px; display: flex; flex: none; }
.left { width: 225px; display: flex; flex-direction: column; padding: 1px 3px 3px 2px; border-right: 1px solid #aaa; flex: none; }
.tabs { height: 10px; display: flex; padding-left: 1px; flex: none; }
.tab { padding: 1px 0 0 0; width: 29px; line-height: 9px; color: #555; font-size: 5.500px; }
.tab.active { width: 31px; background: #fff; color: #333; padding-left: 1px; display: flex; align-items: center; gap: 2px; }
.tabx { width: 5px; height: 5px; }
.ptools { height: 15px; display: flex; align-items: center; border-top: 1px solid #ddd; padding-left: 0; flex: none; }
.ptools .ic { width: 14.500px; }
.ptools .on { background: #f5b070; }
.thead { display: flex; align-items: center; background: linear-gradient(#fafafa, #e4e4e4); border-top: 1px solid #aaa; border-bottom: 1px solid #ccc; flex: none; font-size: 5.800px; color: #222; }
.thead.full { font-size: 6.300px; }
.h15 { height: 15px; } .h12 { height: 12px; } .h11 { height: 11px; }
.th { padding: 0 1px; border-right: 1px solid #ddd; height: 100%; display: flex; align-items: center; }
.th.sel { background: #d8e8f0; }
.th.nm { border-right: 1px solid #bbb; }
.hic { width: 9px; height: 9px; margin: 0 1px; flex: none; }
.hic.last { margin-right: 2px; }
.list { background-color: #fff; background-image: repeating-linear-gradient(transparent 0 9px, #eef6f6 9px 10px); flex: none; border-left: 1px solid #ccc; border-right: 1px solid #ccc; }
.h42 { height: 42px; } .h201 { height: 201px; }
.grow { flex: 1; }
.dropline { position: relative; flex: none; }
.d3 { height: 3px; } .d6 { height: 6px; }
.tri { position: absolute; right: 6px; top: 0; border-left: 3px solid transparent; border-right: 3px solid transparent; border-top: 3px solid #333; }
.inrow { height: 15px; display: flex; align-items: center; gap: 1px; flex: none; }
.spin { width: 6px; height: 13px; display: flex; flex-direction: column; justify-content: space-between; align-items: center; padding: 2px 0; }
.up { border-left: 2px solid transparent; border-right: 2px solid transparent; border-bottom: 2px solid #222; }
.dn { border-left: 2px solid transparent; border-right: 2px solid transparent; border-top: 2px solid #222; }
.txt { flex: 1; height: 12px; background: #fff; border: 1px solid #888; border-right-color: #ccc; border-bottom-color: #ccc; }
.eyes { height: 16px; display: flex; align-items: center; padding-left: 2px; flex: none; }

.right { flex: 1; display: flex; flex-direction: column; min-width: 0; }
.upper { height: 379px; display: flex; padding-top: 8px; flex: none; }
.side { width: 24px; display: flex; flex-direction: column; align-items: center; gap: .4px; flex: none; padding-top: 3px; padding-left: 1px; }
.dots { width: 13px; height: 1px; margin-bottom: 2px; background: repeating-linear-gradient(90deg, #333 0 1px, transparent 1px 3px); }
.sic { width: 14px; height: 14px; flex: none; }
.viewport { width: 747px; height: 371px; border: 1px solid #38d8e0; background: linear-gradient(#2c5479, #9c9e9e); position: relative; flex: none; }
.axes { position: absolute; left: 0; bottom: 1px; width: 60px; height: 50px; overflow: visible; }
.axt { font-family: "Liberation Serif", serif; font-size: 7px; fill: #ddd; }
.lowbar { height: 24px; padding-left: 4px; border-bottom: 1px solid #bbb; margin-right: 5px; padding-top: 2px; }
.combo { width: 36px; height: 11px; border: 1px solid #888; background: #fff; font-size: 5.400px; line-height: 9px; padding-left: 1px; color: #555; position: relative; flex: none; }
.chev { position: absolute; right: 2px; top: 2px; width: 4px; height: 4px; border-right: 1px solid #555; border-bottom: 1px solid #555; transform: rotate(45deg) scale(.8); }
.slider { width: 87px; height: 9px; margin-left: 1.500px; margin-right: 1.600px; background: linear-gradient(#c8c8c8 0 4px, #eee 4px 6px, #c8c8c8 6px 7px, transparent 7px); position: relative; flex: none; }
.thumb { position: absolute; left: 0; top: 1px; width: 16px; height: 3px; background: #f4f4f4; border-bottom: 1px solid #999; }
.thumb2 { position: absolute; right: 1px; top: 7px; width: 9px; height: 1px; background: #999; }

.load { flex: 1; padding: 5px 0 0 5px; margin-right: 4px; border-right: 1px solid #bbb; margin-bottom: 3px; display: flex; flex-direction: column; position: relative; color: #444; }
.loadhead { height: 12px; line-height: 9px; font-size: 5.600px; }
.frow { height: 14px; display: flex; align-items: center; flex: none; padding-left: 10px; }
.chk { width: 7px; height: 7px; background: #fff; border: 1px solid #999; flex: none; display: block; }
.chk svg { display: block; width: 5px; height: 5px; }
.chk.off { background: #eee; border-color: #bbb; margin-left: 3px; }
.flabel { width: 40px; margin-left: 3px; flex: none; font-size: 5.600px; }
.fic { width: 8px; height: 8px; flex: none; }
.field { width: 657px; height: 12px; margin-left: 2px; background: #fff; border-top: 2px solid #999; flex: none; }
.over { margin-left: 3px; color: #aaa; font-size: 5.200px; }
.fic2 { width: 9px; height: 9px; margin-left: 3px; }
.actions { display: flex; align-items: center; justify-content: flex-end; margin-top: 26px; height: 14px; padding-right: 2px; border-bottom: 1px solid #bbb; margin-left: -5px; font-size: 5.500px; }
.tpl { margin-right: 10px; font-size: 5.600px; }
.stdsel { width: 66px; height: 11px; background: #fff; border: 1px solid #666; border-right-color: #ccc; border-bottom-color: #ccc; line-height: 9px; padding-left: 1px; margin-right: 4px; position: relative; color: #333; font-size: 5.400px; }
.stdarrow { position: absolute; right: 0; top: 0; width: 7px; height: 9px; background: #eee; }
.stdarrow::after { content: ""; position: absolute; left: 1px; top: 3px; border-left: 2.500px solid transparent; border-right: 2.500px solid transparent; border-top: 3px solid #222; }
.btn { width: 41px; height: 12px; text-align: center; line-height: 10px; background: #f0f0f0; border: 1px solid #fff; border-right-color: #888; border-bottom-color: #888; color: #444; }
.btn.wide { width: 52px; margin-right: 3px; }

.status { height: 13px; background: #eee; font-size: 6.200px; padding-left: 2px; line-height: 12px; flex: none; color: #444; }
.taskbar { flex: 1; background: #11141a; display: flex; align-items: stretch; position: relative; }
.win { width: 10px; height: 10px; margin: 5px 12px 0 7px; flex: none; }
.tb { width: 25.500px; display: flex; align-items: center; justify-content: center; flex: none; position: relative; }
.tb svg { width: 12px; height: 12px; }
.tb.tv { margin-right: 1px; width: 26px; margin-left: -5px; }
.tb.tv svg { width: 9px; height: 9px; }
.ul::after { content: ""; position: absolute; left: 2px; right: 2px; bottom: 0; height: 1px; background: #60c8e8; }
.explorer { background: #3a3d42; }
.explorer::after { content: ""; position: absolute; left: 0; right: 0; bottom: 0; height: 1px; background: #60c8e8; }
.hwtask { background: #a4591c; }
.hwtask::after { content: ""; position: absolute; left: 0; right: 0; bottom: 0; height: 1px; background: #f08020; }
.epic { width: 10px; height: 13px; background: #222; color: #eee; font-size: 3.500px; font-weight: bold; text-align: center; line-height: 8px; }
.tray { margin-left: auto; display: flex; align-items: center; padding-right: 12px; color: #ddd; }
.tr { flex: none; }
.t8 { width: 8px; height: 8px; margin-right: 4.500px; }
.clock { display: flex; flex-direction: column; align-items: center; font-size: 6px; line-height: 10px; color: #ddd; margin: 0 10px 0 2.500px; width: 30px; }
.note { width: 9px; height: 9px; }

.dialog { position: absolute; left: 84px; top: 132px; width: 480px; height: 237px; background: #fff; box-shadow: 1px 2px 5px rgba(0,0,0,.55); display: flex; flex-direction: column; }
.dtitle { height: 14px; display: flex; align-items: center; padding-left: 2px; color: #999; font-size: 6px; gap: 2px; flex: none; border-bottom: 1px solid #bbb; }
.dlogo { width: 9px; height: 9px; }
.dx { width: 7px; height: 7px; margin-left: auto; margin-right: 4px; }
.dbody { flex: 1; display: flex; min-height: 0; }
.dmain { width: 462px; flex: none; }
.dhead { height: 10px; background: linear-gradient(#f8f8f8, #e8e8e8); border-bottom: 1px solid #ccc; display: flex; color: #333; font-size: 6.100px; line-height: 10px; }
.c1 { width: 16px; border-right: 1px solid #ccc; }
.c2 { width: 8px; border-right: 1px solid #ccc; }
.c3 { width: 31px; padding-left: 8px; border-right: 1px solid #ccc; }
.c4 { padding-left: 3px; }
.drow { height: 11px; display: flex; align-items: center; padding-left: 3px; color: #333; font-size: 6.100px; background: #fff; }
.minus { width: 6px; height: 6px; border: 1px solid #aaa; position: relative; margin-right: 5px; }
.minus::after { content: ""; position: absolute; left: 1px; top: 1.500px; width: 2px; height: 1px; background: #777; }
.dmsg { height: 10px; display: flex; align-items: center; background: #f7f7e2; margin-left: 14px; padding-left: 2px; overflow: hidden; white-space: pre; }
.dwarn { width: 10px; height: 10px; flex: none; }
.mtime { color: #999; font-size: 5.700px; margin-left: 2px; width: 28px; flex: none; }
.mtext { font-family: "Liberation Mono", monospace; font-size: 6.900px; color: #333; }
.dstrip { flex: 1; background: #f4f4f4; padding: 2px 1px 0 2px; display: flex; flex-direction: column; gap: 1px; }
.badge { height: 10px; background: #f8c080; border: 1px solid #f0e0d0; display: flex; align-items: center; font-size: 6.500px; color: #554; padding-left: 1px; gap: 1px; }
.badge svg { width: 8px; height: 8px; }
.dscroll { height: 10px; background: linear-gradient(90deg, #f0f0f0 462px, #f4f4f4 462px); position: relative; flex: none; }
.thumbbar { position: absolute; left: 9px; top: 0; bottom: 1px; width: 349px; background: #c8c8c8; }
.sl, .sr { position: absolute; top: 3px; width: 3px; height: 3px; border-left: 1px solid #333; border-bottom: 1px solid #333; transform: rotate(45deg); }
.sl { left: 3px; }
.sr { left: 457px; transform: rotate(225deg); }
.dfoot { height: 10px; background: #f0f0f0; border-top: 1px solid #ddd; flex: none; }

.toast { position: absolute; left: 828px; top: 47px; width: 172px; height: 64px; background: #000; border-left: 3px solid #76b900; display: flex; align-items: center; color: #e8e8e8; }
.nvlogo { width: 23px; height: 23px; margin-left: 11px; flex: none; }
.toast p { margin: 0 0 0 12px; font-family: Roboto, sans-serif; font-size: 8.300px; line-height: 11px; white-space: nowrap; }
```
